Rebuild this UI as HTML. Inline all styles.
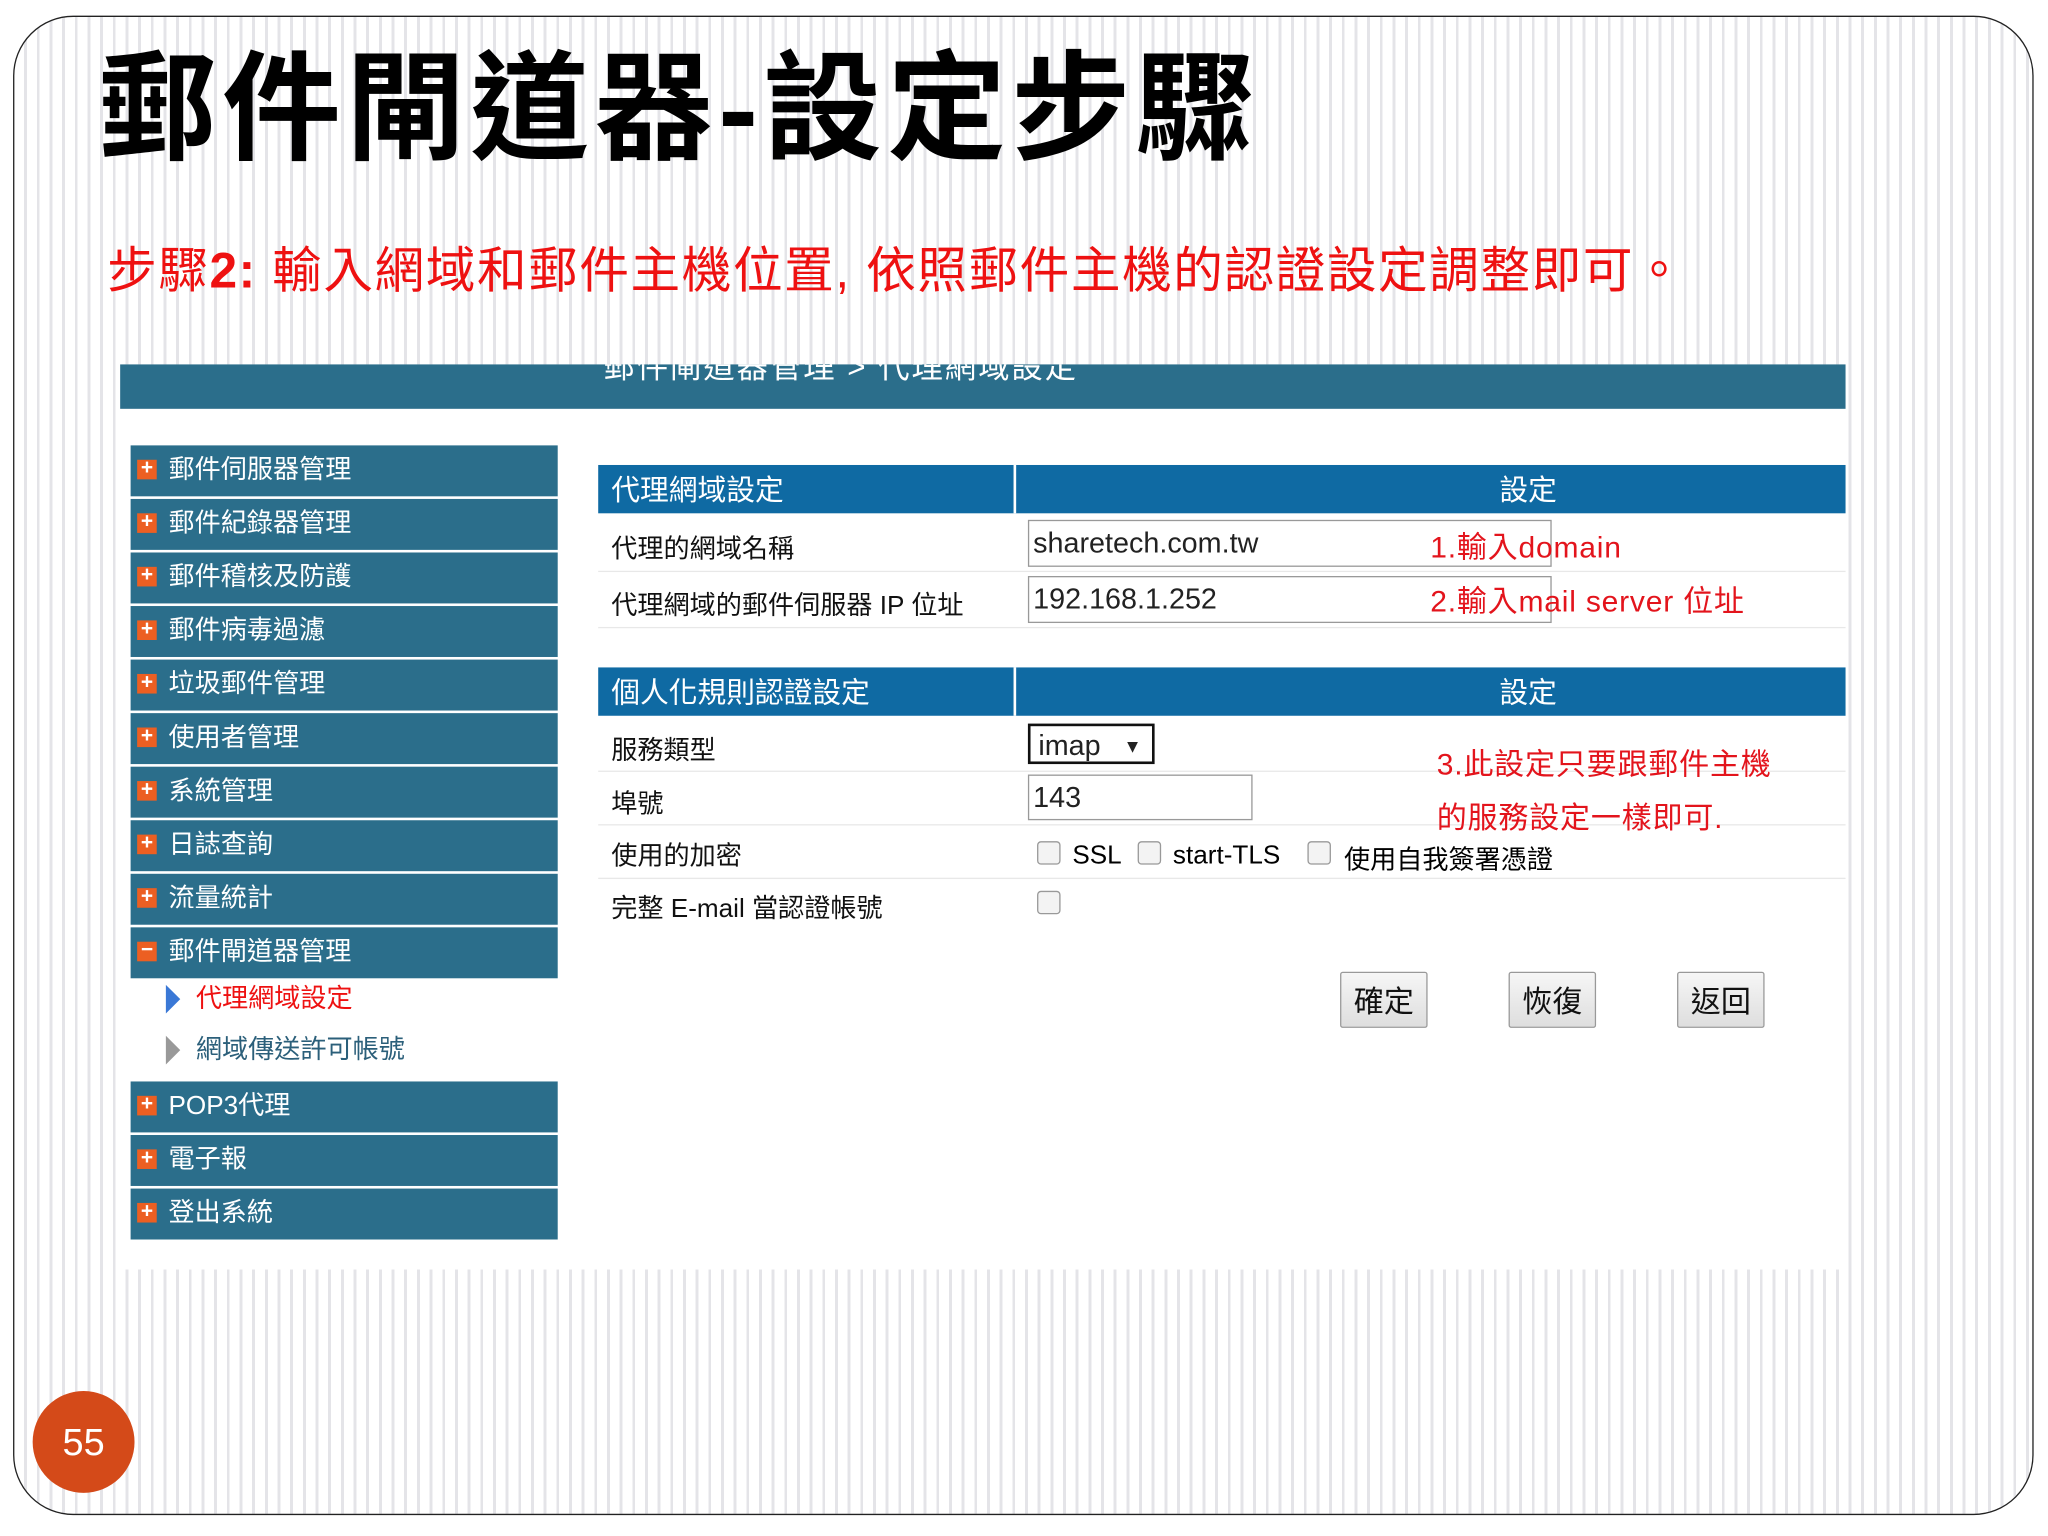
<!DOCTYPE html>
<html><head><meta charset="utf-8"><style>
html,body{margin:0;padding:0;background:#fff;width:2048px;height:1536px;overflow:hidden}
#s{position:absolute;left:0;top:0;width:1568px;height:1176px;transform:scale(1.30612);transform-origin:0 0;font-family:"Liberation Sans","Noto Sans CJK TC",sans-serif}
.a{position:absolute}
#frame{left:10px;top:12px;width:1545px;height:1146px;border:1.5px solid #222;border-radius:46px;background:repeating-linear-gradient(90deg,#fff 0,#fff 7.5px,#e4e4e8 7.5px,#e4e4e8 9.7px)}
#shot{left:92px;top:279px;width:1321px;height:693px;background:#fff}
.t{white-space:nowrap}
.side{left:100px;width:327px;height:39px;background:#2b6e8b;color:#fff;font-size:20px;line-height:38px}
.side i{position:absolute;left:5px;top:11px;width:15px;height:15px;background:#ec5f22;color:#fff;font-style:normal;font-size:16px;line-height:14px;text-align:center;font-weight:bold}
.side span{position:absolute;left:29px;top:0}
.hd{left:458px;width:955px;height:37px;background:#0f6aa3;color:#fff;font-size:22px;line-height:40px}
.row{left:458px;width:955px;border-bottom:1px solid #e8e8e8;font-size:20px;color:#111}
.inp{border:1px solid #999;background:#fff;font-size:22px;color:#222;line-height:34px;padding-left:3px;box-sizing:border-box}
.red{color:#e3141c;font-size:23px;letter-spacing:0.6px}
.btn{width:67px;height:43px;border:1px solid #999;border-radius:2px;background:linear-gradient(#f6f6f6,#dedede);font-size:23px;text-align:center;line-height:44px;box-sizing:border-box;color:#111}
.cb{width:16px;height:16px;border:1px solid #999;border-radius:3px;background:#f3f3f3}
</style></head><body><div id="s">
<div id="frame" class="a"></div>
<div class="a t" style="left:75px;top:30px;font-size:91px;font-weight:bold;color:#000;letter-spacing:4px;line-height:110px">郵件閘道器-設定步驟</div>
<div class="a t" style="left:82px;top:184px;font-size:38px;color:#ee1111;line-height:48px;letter-spacing:1.2px">步驟<b>2:</b> 輸入網域和郵件主機位置, 依照郵件主機的認證設定調整即可。</div>
<div id="shot" class="a"></div>
<div class="a" style="left:92px;top:279px;width:1321px;height:34px;background:#2b6e8b;overflow:hidden"><div class="a t" style="left:370px;top:-14px;color:#fff;font-size:24px;line-height:34px;letter-spacing:1.5px">郵件閘道器管理 &gt; 代理網域設定</div></div>

<div class="a side" style="top:341px"><i>+</i><span>郵件伺服器管理</span></div>
<div class="a side" style="top:382px"><i>+</i><span>郵件紀錄器管理</span></div>
<div class="a side" style="top:423px"><i>+</i><span>郵件稽核及防護</span></div>
<div class="a side" style="top:464px"><i>+</i><span>郵件病毒過濾</span></div>
<div class="a side" style="top:505px"><i>+</i><span>垃圾郵件管理</span></div>
<div class="a side" style="top:546px"><i>+</i><span>使用者管理</span></div>
<div class="a side" style="top:587px"><i>+</i><span>系統管理</span></div>
<div class="a side" style="top:628px"><i>+</i><span>日誌查詢</span></div>
<div class="a side" style="top:669px"><i>+</i><span>流量統計</span></div>
<div class="a side" style="top:710px"><i>−</i><span>郵件閘道器管理</span></div>
<div class="a" style="left:127px;top:754px;width:0;height:0;border-left:11px solid #3a78d6;border-top:11px solid transparent;border-bottom:11px solid transparent"></div>
<div class="a t" style="left:150px;top:751px;font-size:20px;color:#ee1111;line-height:28px">代理網域設定</div>
<div class="a" style="left:127px;top:793px;width:0;height:0;border-left:11px solid #999;border-top:11px solid transparent;border-bottom:11px solid transparent"></div>
<div class="a t" style="left:150px;top:790px;font-size:20px;color:#2b5f7a;line-height:28px">網域傳送許可帳號</div>
<div class="a side" style="top:828px"><i>+</i><span>POP3代理</span></div>
<div class="a side" style="top:869px"><i>+</i><span>電子報</span></div>
<div class="a side" style="top:910px"><i>+</i><span>登出系統</span></div>

<div class="a hd" style="top:356px"><span class="a" style="left:10px">代理網域設定</span><div class="a" style="left:318px;top:0;width:2px;height:37px;background:#fff"></div><span class="a" style="left:690px">設定</span></div>
<div class="a row" style="top:396px;height:41px"><span class="a" style="left:10px;top:8px">代理的網域名稱</span></div>
<div class="a row" style="top:439px;height:41px"><span class="a" style="left:10px;top:8px">代理網域的郵件伺服器 IP 位址</span></div>
<div class="a inp" style="left:787px;top:398px;width:401px;height:36px">sharetech.com.tw</div>
<div class="a inp" style="left:787px;top:441px;width:401px;height:36px">192.168.1.252</div>
<div class="a t red" style="left:1095px;top:400px">1.輸入domain</div>
<div class="a t red" style="left:1095px;top:441px">2.輸入mail server 位址</div>

<div class="a hd" style="top:511px"><span class="a" style="left:10px">個人化規則認證設定</span><div class="a" style="left:318px;top:0;width:2px;height:37px;background:#fff"></div><span class="a" style="left:690px">設定</span></div>
<div class="a row" style="top:551px;height:39px"><span class="a" style="left:10px;top:7px">服務類型</span></div>
<div class="a row" style="top:592px;height:39px"><span class="a" style="left:10px;top:7px">埠號</span></div>
<div class="a row" style="top:633px;height:39px"><span class="a" style="left:10px;top:6px">使用的加密</span></div>
<div class="a row" style="top:673px;height:38px;border:none"><span class="a" style="left:10px;top:6px">完整 E-mail 當認證帳號</span></div>
<div class="a inp" style="left:787px;top:554px;width:97px;height:31px;border:2px solid #111;line-height:30px;padding-left:6px">imap <span style="font-size:14px;position:absolute;right:8px;top:0">▼</span></div>
<div class="a inp" style="left:787px;top:593px;width:172px;height:35px">143</div>
<div class="a cb" style="left:794px;top:644px"></div><div class="a t" style="left:821px;top:644px;font-size:20px">SSL</div>
<div class="a cb" style="left:871px;top:644px"></div><div class="a t" style="left:898px;top:644px;font-size:20px">start-TLS</div>
<div class="a cb" style="left:1001px;top:644px"></div><div class="a t" style="left:1029px;top:642px;font-size:20px">使用自我簽署憑證</div>
<div class="a cb" style="left:794px;top:682px"></div>
<div class="a t red" style="left:1100px;top:566px">3.此設定只要跟郵件主機</div>
<div class="a t red" style="left:1100px;top:607px">的服務設定一樣即可.</div>

<div class="a btn" style="left:1026px;top:744px">確定</div>
<div class="a btn" style="left:1155px;top:744px">恢復</div>
<div class="a btn" style="left:1284px;top:744px">返回</div>

<div class="a" style="left:25px;top:1065px;width:78px;height:78px;border-radius:50%;background:#d44a19;color:#fff;font-size:29px;text-align:center;line-height:80px">55</div>
</div></body></html>
